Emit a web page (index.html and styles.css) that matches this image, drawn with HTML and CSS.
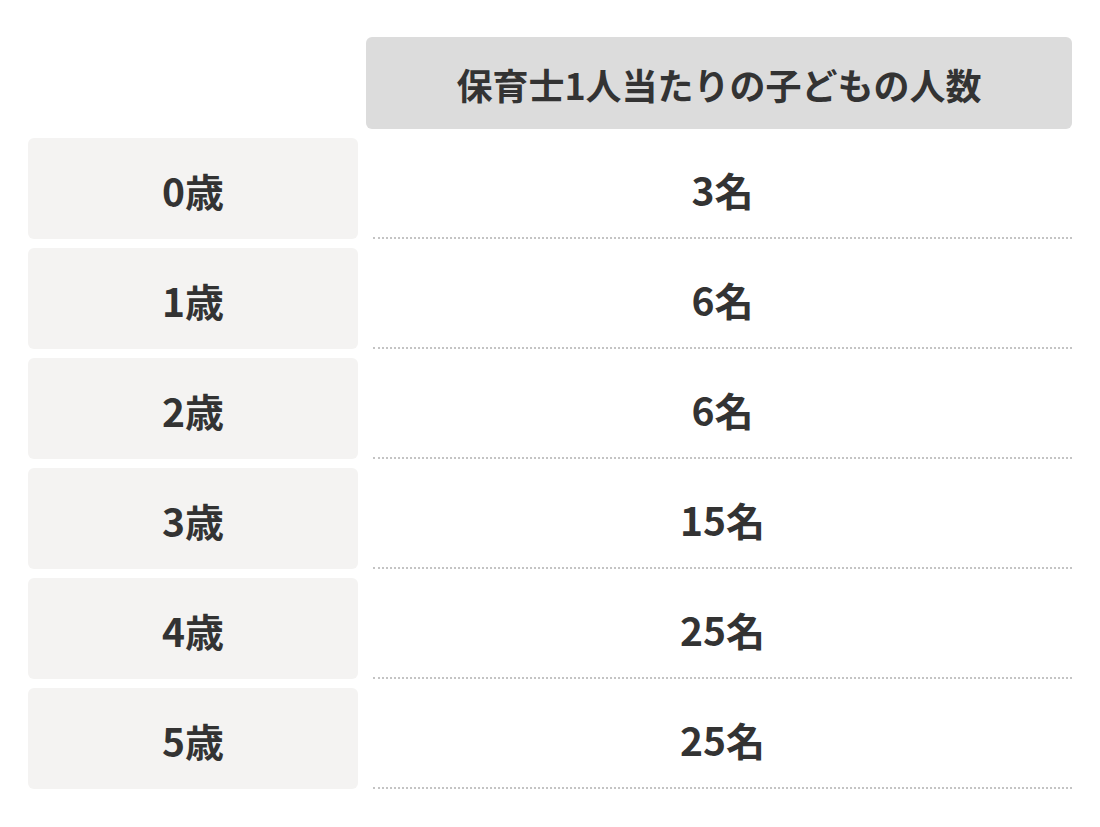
FILE: index.html
```html
<!DOCTYPE html>
<html lang="ja">
<head>
<meta charset="utf-8">
<title>保育士1人当たりの子どもの人数</title>
<link rel="stylesheet" href="styles.css">
</head>
<body>
<div class="ratio-table">
  <div class="corner"></div>
  <div class="head">保育士1人当たりの子どもの人数</div>

  <div class="age">0歳</div>
  <div class="value">3名</div>

  <div class="age">1歳</div>
  <div class="value">6名</div>

  <div class="age">2歳</div>
  <div class="value">6名</div>

  <div class="age">3歳</div>
  <div class="value">15名</div>

  <div class="age">4歳</div>
  <div class="value">25名</div>

  <div class="age">5歳</div>
  <div class="value">25名</div>
</div>
</body>
</html>
```
FILE: styles.css
```css
html, body {
  margin: 0;
  padding: 0;
  background: #ffffff;
}

body {
  font-family: "Noto Sans CJK JP", "Noto Sans", sans-serif;
  color: #333333;
}

.ratio-table {
  display: grid;
  grid-template-columns: 330px 1fr;
  grid-template-rows: 92px repeat(6, 101px);
  column-gap: 8px;
  row-gap: 9px;
  padding: 37px 28px 0 28px;
}

.head {
  background: #dcdcdc;
  border-radius: 6px;
  display: flex;
  align-items: center;
  justify-content: center;
  font-size: 36px;
  font-weight: 700;
  line-height: 1;
  padding-top: 2px;
}

.age {
  background: #f4f3f2;
  border-radius: 6px;
  display: flex;
  align-items: center;
  justify-content: center;
  font-size: 39px;
  font-weight: 700;
  line-height: 1;
  padding-top: 4px;
}

.value {
  margin-left: 7px;
  border-bottom: 2px dotted #c4c4c4;
  display: flex;
  align-items: center;
  justify-content: center;
  font-size: 39px;
  font-weight: 700;
  line-height: 1;
  padding-top: 4px;
}
```
